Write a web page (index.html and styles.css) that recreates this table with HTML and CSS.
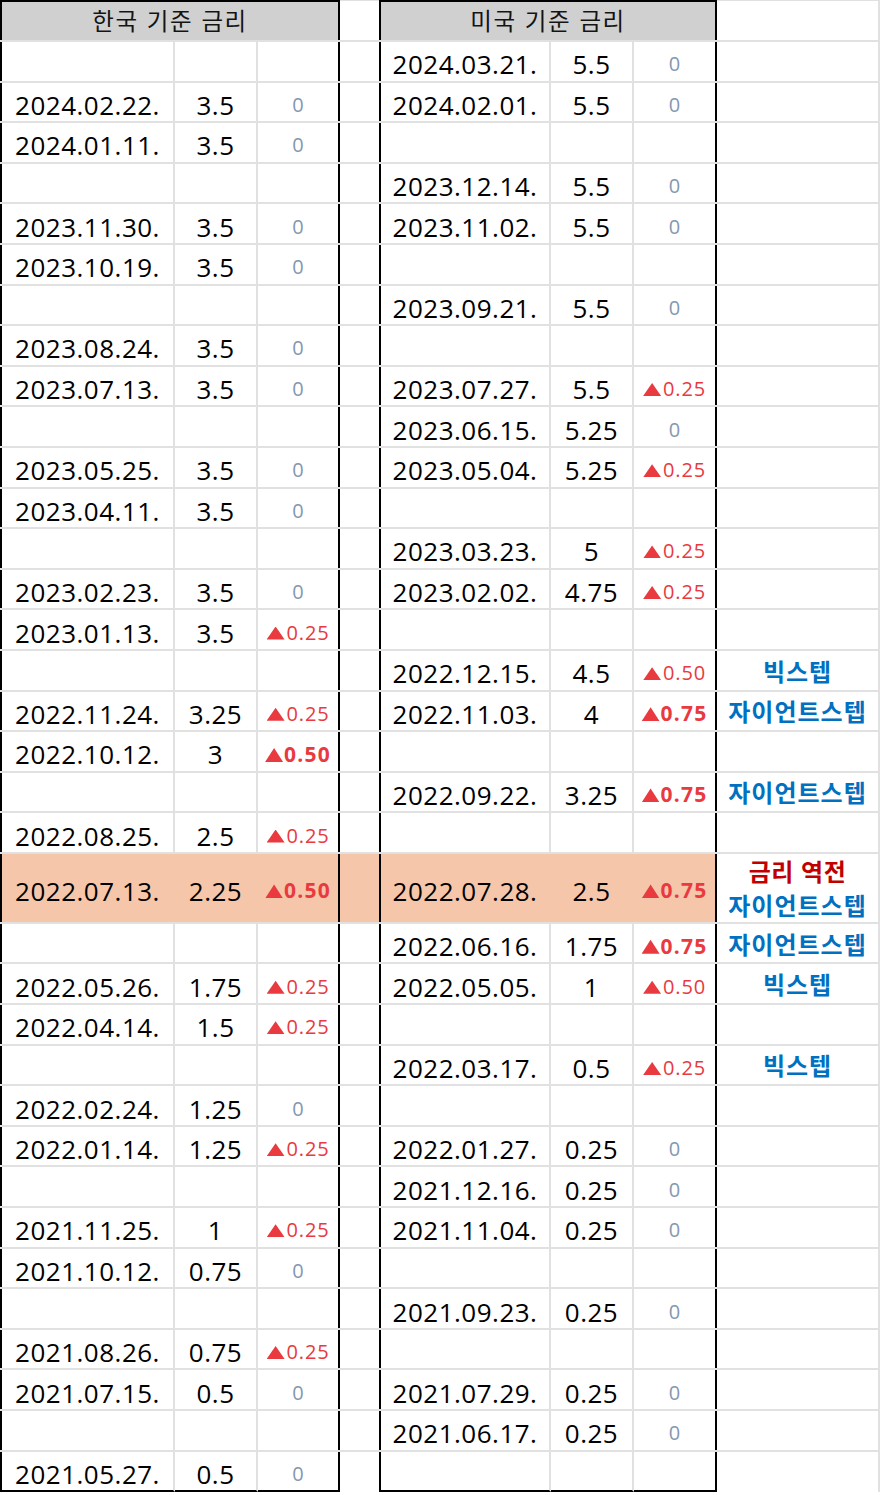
FILE: index.html
```html
<!DOCTYPE html>
<html lang="ko">
<head>
<meta charset="utf-8">
<title>한국 / 미국 기준 금리</title>
<link rel="stylesheet" href="styles.css">
</head>
<body>
<div class="sheet">
  <div class="c hd hd-kr">한국 기준 금리</div><div class="c d top"></div><div class="c hd hd-us">미국 기준 금리</div><div class="c h top"></div>

  <div class="c a"></div><div class="c b"></div><div class="c cc"></div><div class="c d"></div><div class="c e">2024.03.21.</div><div class="c f">5.5</div><div class="c g"><span class="z">0</span></div><div class="c h"></div>
  <div class="c a">2024.02.22.</div><div class="c b">3.5</div><div class="c cc"><span class="z">0</span></div><div class="c d"></div><div class="c e">2024.02.01.</div><div class="c f">5.5</div><div class="c g"><span class="z">0</span></div><div class="c h"></div>
  <div class="c a">2024.01.11.</div><div class="c b">3.5</div><div class="c cc"><span class="z">0</span></div><div class="c d"></div><div class="c e"></div><div class="c f"></div><div class="c g"></div><div class="c h"></div>
  <div class="c a"></div><div class="c b"></div><div class="c cc"></div><div class="c d"></div><div class="c e">2023.12.14.</div><div class="c f">5.5</div><div class="c g"><span class="z">0</span></div><div class="c h"></div>
  <div class="c a">2023.11.30.</div><div class="c b">3.5</div><div class="c cc"><span class="z">0</span></div><div class="c d"></div><div class="c e">2023.11.02.</div><div class="c f">5.5</div><div class="c g"><span class="z">0</span></div><div class="c h"></div>
  <div class="c a">2023.10.19.</div><div class="c b">3.5</div><div class="c cc"><span class="z">0</span></div><div class="c d"></div><div class="c e"></div><div class="c f"></div><div class="c g"></div><div class="c h"></div>
  <div class="c a"></div><div class="c b"></div><div class="c cc"></div><div class="c d"></div><div class="c e">2023.09.21.</div><div class="c f">5.5</div><div class="c g"><span class="z">0</span></div><div class="c h"></div>
  <div class="c a">2023.08.24.</div><div class="c b">3.5</div><div class="c cc"><span class="z">0</span></div><div class="c d"></div><div class="c e"></div><div class="c f"></div><div class="c g"></div><div class="c h"></div>
  <div class="c a">2023.07.13.</div><div class="c b">3.5</div><div class="c cc"><span class="z">0</span></div><div class="c d"></div><div class="c e">2023.07.27.</div><div class="c f">5.5</div><div class="c g"><span class="up"><i class="tri"></i>0.25</span></div><div class="c h"></div>
  <div class="c a"></div><div class="c b"></div><div class="c cc"></div><div class="c d"></div><div class="c e">2023.06.15.</div><div class="c f">5.25</div><div class="c g"><span class="z">0</span></div><div class="c h"></div>
  <div class="c a">2023.05.25.</div><div class="c b">3.5</div><div class="c cc"><span class="z">0</span></div><div class="c d"></div><div class="c e">2023.05.04.</div><div class="c f">5.25</div><div class="c g"><span class="up"><i class="tri"></i>0.25</span></div><div class="c h"></div>
  <div class="c a">2023.04.11.</div><div class="c b">3.5</div><div class="c cc"><span class="z">0</span></div><div class="c d"></div><div class="c e"></div><div class="c f"></div><div class="c g"></div><div class="c h"></div>
  <div class="c a"></div><div class="c b"></div><div class="c cc"></div><div class="c d"></div><div class="c e">2023.03.23.</div><div class="c f">5</div><div class="c g"><span class="up"><i class="tri"></i>0.25</span></div><div class="c h"></div>
  <div class="c a">2023.02.23.</div><div class="c b">3.5</div><div class="c cc"><span class="z">0</span></div><div class="c d"></div><div class="c e">2023.02.02.</div><div class="c f">4.75</div><div class="c g"><span class="up"><i class="tri"></i>0.25</span></div><div class="c h"></div>
  <div class="c a">2023.01.13.</div><div class="c b">3.5</div><div class="c cc"><span class="up"><i class="tri"></i>0.25</span></div><div class="c d"></div><div class="c e"></div><div class="c f"></div><div class="c g"></div><div class="c h"></div>
  <div class="c a"></div><div class="c b"></div><div class="c cc"></div><div class="c d"></div><div class="c e">2022.12.15.</div><div class="c f">4.5</div><div class="c g"><span class="up"><i class="tri"></i>0.50</span></div><div class="c h">빅스텝</div>
  <div class="c a">2022.11.24.</div><div class="c b">3.25</div><div class="c cc"><span class="up"><i class="tri"></i>0.25</span></div><div class="c d"></div><div class="c e">2022.11.03.</div><div class="c f">4</div><div class="c g"><span class="up bold"><i class="tri"></i>0.75</span></div><div class="c h">자이언트스텝</div>
  <div class="c a">2022.10.12.</div><div class="c b">3</div><div class="c cc"><span class="up bold"><i class="tri"></i>0.50</span></div><div class="c d"></div><div class="c e"></div><div class="c f"></div><div class="c g"></div><div class="c h"></div>
  <div class="c a"></div><div class="c b"></div><div class="c cc"></div><div class="c d"></div><div class="c e">2022.09.22.</div><div class="c f">3.25</div><div class="c g"><span class="up bold"><i class="tri"></i>0.75</span></div><div class="c h">자이언트스텝</div>
  <div class="c a">2022.08.25.</div><div class="c b">2.5</div><div class="c cc"><span class="up"><i class="tri"></i>0.25</span></div><div class="c d"></div><div class="c e"></div><div class="c f"></div><div class="c g"></div><div class="c h"></div>

  <div class="c a hl">2022.07.13.</div><div class="c b hl">2.25</div><div class="c cc hl"><span class="up bold"><i class="tri"></i>0.50</span></div><div class="c d hl"></div><div class="c e hl">2022.07.28.</div><div class="c f hl">2.5</div><div class="c g hl"><span class="up bold"><i class="tri"></i>0.75</span></div><div class="c h two"><span class="red">금리 역전</span><span>자이언트스텝</span></div>

  <div class="c a"></div><div class="c b"></div><div class="c cc"></div><div class="c d"></div><div class="c e">2022.06.16.</div><div class="c f">1.75</div><div class="c g"><span class="up bold"><i class="tri"></i>0.75</span></div><div class="c h">자이언트스텝</div>
  <div class="c a">2022.05.26.</div><div class="c b">1.75</div><div class="c cc"><span class="up"><i class="tri"></i>0.25</span></div><div class="c d"></div><div class="c e">2022.05.05.</div><div class="c f">1</div><div class="c g"><span class="up"><i class="tri"></i>0.50</span></div><div class="c h">빅스텝</div>
  <div class="c a">2022.04.14.</div><div class="c b">1.5</div><div class="c cc"><span class="up"><i class="tri"></i>0.25</span></div><div class="c d"></div><div class="c e"></div><div class="c f"></div><div class="c g"></div><div class="c h"></div>
  <div class="c a"></div><div class="c b"></div><div class="c cc"></div><div class="c d"></div><div class="c e">2022.03.17.</div><div class="c f">0.5</div><div class="c g"><span class="up"><i class="tri"></i>0.25</span></div><div class="c h">빅스텝</div>
  <div class="c a">2022.02.24.</div><div class="c b">1.25</div><div class="c cc"><span class="z">0</span></div><div class="c d"></div><div class="c e"></div><div class="c f"></div><div class="c g"></div><div class="c h"></div>
  <div class="c a">2022.01.14.</div><div class="c b">1.25</div><div class="c cc"><span class="up"><i class="tri"></i>0.25</span></div><div class="c d"></div><div class="c e">2022.01.27.</div><div class="c f">0.25</div><div class="c g"><span class="z">0</span></div><div class="c h"></div>
  <div class="c a"></div><div class="c b"></div><div class="c cc"></div><div class="c d"></div><div class="c e">2021.12.16.</div><div class="c f">0.25</div><div class="c g"><span class="z">0</span></div><div class="c h"></div>
  <div class="c a">2021.11.25.</div><div class="c b">1</div><div class="c cc"><span class="up"><i class="tri"></i>0.25</span></div><div class="c d"></div><div class="c e">2021.11.04.</div><div class="c f">0.25</div><div class="c g"><span class="z">0</span></div><div class="c h"></div>
  <div class="c a">2021.10.12.</div><div class="c b">0.75</div><div class="c cc"><span class="z">0</span></div><div class="c d"></div><div class="c e"></div><div class="c f"></div><div class="c g"></div><div class="c h"></div>
  <div class="c a"></div><div class="c b"></div><div class="c cc"></div><div class="c d"></div><div class="c e">2021.09.23.</div><div class="c f">0.25</div><div class="c g"><span class="z">0</span></div><div class="c h"></div>
  <div class="c a">2021.08.26.</div><div class="c b">0.75</div><div class="c cc"><span class="up"><i class="tri"></i>0.25</span></div><div class="c d"></div><div class="c e"></div><div class="c f"></div><div class="c g"></div><div class="c h"></div>
  <div class="c a">2021.07.15.</div><div class="c b">0.5</div><div class="c cc"><span class="z">0</span></div><div class="c d"></div><div class="c e">2021.07.29.</div><div class="c f">0.25</div><div class="c g"><span class="z">0</span></div><div class="c h"></div>
  <div class="c a"></div><div class="c b"></div><div class="c cc"></div><div class="c d"></div><div class="c e">2021.06.17.</div><div class="c f">0.25</div><div class="c g"><span class="z">0</span></div><div class="c h"></div>
  <div class="c a last">2021.05.27.</div><div class="c b last">0.5</div><div class="c cc last"><span class="z">0</span></div><div class="c d"></div><div class="c e last"></div><div class="c f last"></div><div class="c g last"></div><div class="c h"></div>
</div>
</body>
</html>
```

FILE: styles.css
```css
html, body {
  margin: 0;
  padding: 0;
  background: #ffffff;
}

.sheet {
  display: grid;
  width: 880px;
  grid-template-columns: 175px 83px 82px 39px 172px 83px 83px 163px;
  grid-template-rows: 40px repeat(20, 38.6px) 68px repeat(13, 38.6px) 40.6px;
  row-gap: 2px;
  background: #e1e1e1;
  font-family: "Open Sans", "Noto Sans CJK KR", sans-serif;
  color: #000;
}

.c {
  box-sizing: border-box;
  min-width: 0;
  background: #ffffff;
  display: flex;
  align-items: center;
  justify-content: center;
  white-space: nowrap;
}

/* column borders */
.a { border-left: 2px solid #000; border-right: 2px solid #e1e1e1; }
.b { border-right: 2px solid #e1e1e1; }
.cc { border-right: 2px solid #000; }
.e { border-left: 2px solid #000; border-right: 2px solid #e1e1e1; }
.f { border-right: 2px solid #e1e1e1; }
.g { border-right: 2px solid #000; }
.h { border-right: 2px solid #e1e1e1; }

/* dates and rates */
.a, .b, .e, .f {
  font-size: 26px;
  letter-spacing: 0.5px;
  padding-top: 6px;
}

/* change column */
.cc, .g {
  font-size: 20px;
  padding-top: 5px;
}

.z { color: #8497b0; }

.up {
  color: #e83a3f;
  display: inline-block;
  letter-spacing: 0.8px;
}

.tri {
  display: inline-block;
  width: 18px;
  height: 13px;
  margin-right: 2px;
  background: currentColor;
  clip-path: polygon(50% 0, 100% 100%, 0 100%);
}

.up.bold {
  font-weight: 700;
  font-size: 21px;
  letter-spacing: 1.2px;
}

.up.bold .tri {
  height: 14px;
  margin-right: 1px;
}

/* notes column */
.h {
  font-family: "Noto Sans CJK KR", sans-serif;
  font-weight: 700;
  font-size: 24px;
  letter-spacing: 1px;
  color: #0070c0;
}

.two {
  flex-direction: column;
  line-height: 34px;
}

.red {
  color: #c00000;
  letter-spacing: 0.5px;
}

/* header */
.hd {
  background: #d0d0d0;
  border-top: 2px solid #000;
  border-left: 2px solid #000;
  border-right: 2px solid #000;
  font-family: "Noto Sans CJK KR", sans-serif;
  font-size: 23.5px;
  letter-spacing: 1.6px;
  color: #141414;
  padding-bottom: 2px;
}

.hd-kr { grid-column: 1 / 4; }
.hd-us { grid-column: 5 / 8; }

.top { border-top: 1px solid #e1e1e1; }

/* highlighted row */
.hl {
  background: #f5c6aa;
  border-right-color: #f5c6aa;
}

.cc.hl, .g.hl { border-right-color: #000; }

/* table bottom edge */
.last { border-bottom: 2px solid #000; }
```
